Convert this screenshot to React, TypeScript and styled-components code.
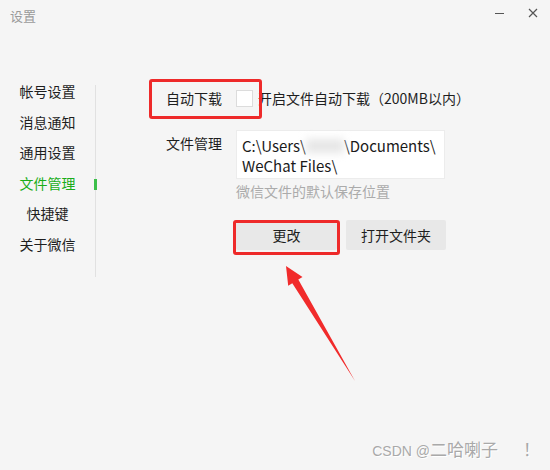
import React from "react";
import styled, { createGlobalStyle } from "styled-components";

const GlobalStyle = createGlobalStyle`
  html, body {
    margin: 0;
    padding: 0;
    background: #f5f5f5;
  }
  body {
    font-family: "Noto Sans CJK SC", "Noto Sans", "Liberation Sans", sans-serif;
    color: #222;
  }
`;

const navItems = ["帐号设置", "消息通知", "通用设置", "文件管理", "快捷键", "关于微信"];

export default function App() {
  return (
    <Window>
      <GlobalStyle />
      <TitleBar>
        <Title>设置</Title>
        <Controls>
          <MinButton />
          <CloseButton viewBox="0 0 10 10">
            <path d="M1 1 L9 9 M9 1 L1 9" stroke="#555" strokeWidth="1.2" />
          </CloseButton>
        </Controls>
      </TitleBar>

      <Content>
        <Sidebar>
          <Nav>
            {navItems.map((name) => (
              <NavItem key={name} $active={name === "文件管理"}>
                {name}
              </NavItem>
            ))}
          </Nav>
          <Divider />
        </Sidebar>

        <Main>
          <Label>自动下载</Label>
          <CheckRow>
            <Checkbox />
            <span>开启文件自动下载（200MB以内）</span>
          </CheckRow>

          <Label $top>文件管理</Label>
          <div>
            <PathBox>
              C:\Users\<Blur />\Documents\
              <br />
              WeChat Files\
            </PathBox>
            <Hint>微信文件的默认保存位置</Hint>
            <Buttons>
              <Button $w={101}>更改</Button>
              <Button $w={100}>打开文件夹</Button>
            </Buttons>
          </div>
        </Main>
      </Content>

      {/* annotations drawn over the screenshot */}
      <Mark style={{ left: 149, top: 79, width: 113, height: 40 }} />
      <Mark style={{ left: 233, top: 220, width: 107, height: 35 }} />
      <Arrow viewBox="0 0 550 470">
        <polygon
          points="286,266 302.5,277 298.3,279.6 355,381 292.3,283.2 288.2,285.7"
          fill="#f12b2b"
        />
      </Arrow>

      <Watermark>
        <Latin>CSDN @</Latin>二哈喇子<Bang>！</Bang>
      </Watermark>
    </Window>
  );
}

const Window = styled.div`
  position: relative;
  width: 550px;
  height: 470px;
  overflow: hidden;
  background: #f5f5f5;
`;

const TitleBar = styled.div`
  height: 36px;
  display: flex;
  justify-content: space-between;
  align-items: flex-start;
  padding: 0 12px 0 10px;
  box-sizing: border-box;
`;

const Title = styled.div`
  padding-top: 7px;
  font-size: 13px;
  line-height: 17px;
  color: #9a9a9a;
`;

const Controls = styled.div`
  display: flex;
  align-items: center;
  gap: 24px;
  padding-top: 8px;
`;

const MinButton = styled.div`
  width: 9px;
  height: 1px;
  background: #555;
`;

const CloseButton = styled.svg`
  width: 10px;
  height: 10px;
  display: block;
`;

const Content = styled.div`
  display: flex;
  align-items: flex-start;
`;

const Sidebar = styled.div`
  display: flex;
  width: 96px;
  margin-top: 40px;
`;

const Nav = styled.div`
  width: 95px;
  display: flex;
  flex-direction: column;
`;

const NavItem = styled.div<{ $active?: boolean }>`
  position: relative;
  height: 30.6px;
  line-height: 30.6px;
  text-align: center;
  font-size: 14px;
  color: ${(p) => (p.$active ? "#1aad19" : "#1e1e1e")};

  &::after {
    content: "";
    display: ${(p) => (p.$active ? "block" : "none")};
    position: absolute;
    right: -2px;
    top: 11px;
    width: 3px;
    height: 11px;
    background: #3cbf4a;
  }
`;

const Divider = styled.div`
  width: 1px;
  height: 192px;
  margin-top: 9px;
  background: #e1e1e1;
`;

const Main = styled.div`
  display: grid;
  grid-template-columns: 126px 1fr;
  column-gap: 14px;
  row-gap: 22px;
  align-content: start;
  align-items: start;
  margin-top: 52px;
`;

const Label = styled.div<{ $top?: boolean }>`
  text-align: right;
  font-size: 14px;
  line-height: 20px;
  color: #1e1e1e;
  margin-top: ${(p) => (p.$top ? "3px" : "0")};
`;

const CheckRow = styled.div`
  display: flex;
  align-items: center;
  gap: 5px;
  height: 20px;
  font-size: 14px;
  color: #1e1e1e;
`;

const Checkbox = styled.div`
  width: 15px;
  height: 15px;
  background: #fff;
  border: 1px solid #dcdcdc;
`;

const PathBox = styled.div`
  width: 209px;
  height: 49px;
  box-sizing: border-box;
  padding: 5px 4px 0 5px;
  background: #fff;
  border: 1px solid #ececec;
  font-size: 15px;
  line-height: 20px;
  color: #1a1a1a;
  white-space: nowrap;
`;

const Blur = styled.span`
  display: inline-block;
  width: 38px;
  height: 14px;
  vertical-align: -1px;
  background: #e6e6e6;
  filter: blur(4px);
`;

const Hint = styled.div`
  margin-top: 2px;
  font-size: 14px;
  line-height: 20px;
  color: #ababab;
`;

const Buttons = styled.div`
  display: flex;
  gap: 9px;
  margin-top: 19px;
`;

const Button = styled.div<{ $w: number }>`
  width: ${(p) => p.$w}px;
  height: 30px;
  line-height: 30px;
  text-align: center;
  font-size: 14px;
  color: #1e1e1e;
  background: #e8e8e8;
  border-radius: 2px;
`;

const Mark = styled.div`
  position: absolute;
  box-sizing: border-box;
  border: 3px solid #ee2a2a;
  border-radius: 3px;
`;

const Arrow = styled.svg`
  position: absolute;
  left: 0;
  top: 0;
  width: 550px;
  height: 470px;
  pointer-events: none;
`;

const Watermark = styled.div`
  position: absolute;
  right: 10px;
  bottom: 8px;
  display: flex;
  align-items: baseline;
  font-size: 17px;
  line-height: 22px;
  color: #a9a9a9;
  text-shadow: 1px 1px 0 #fff;
`;

const Latin = styled.span`
  font-family: "Liberation Sans", sans-serif;
  font-size: 14px;
  white-space: pre;
`;

const Bang = styled.span`
  margin-left: 25px;
`;
